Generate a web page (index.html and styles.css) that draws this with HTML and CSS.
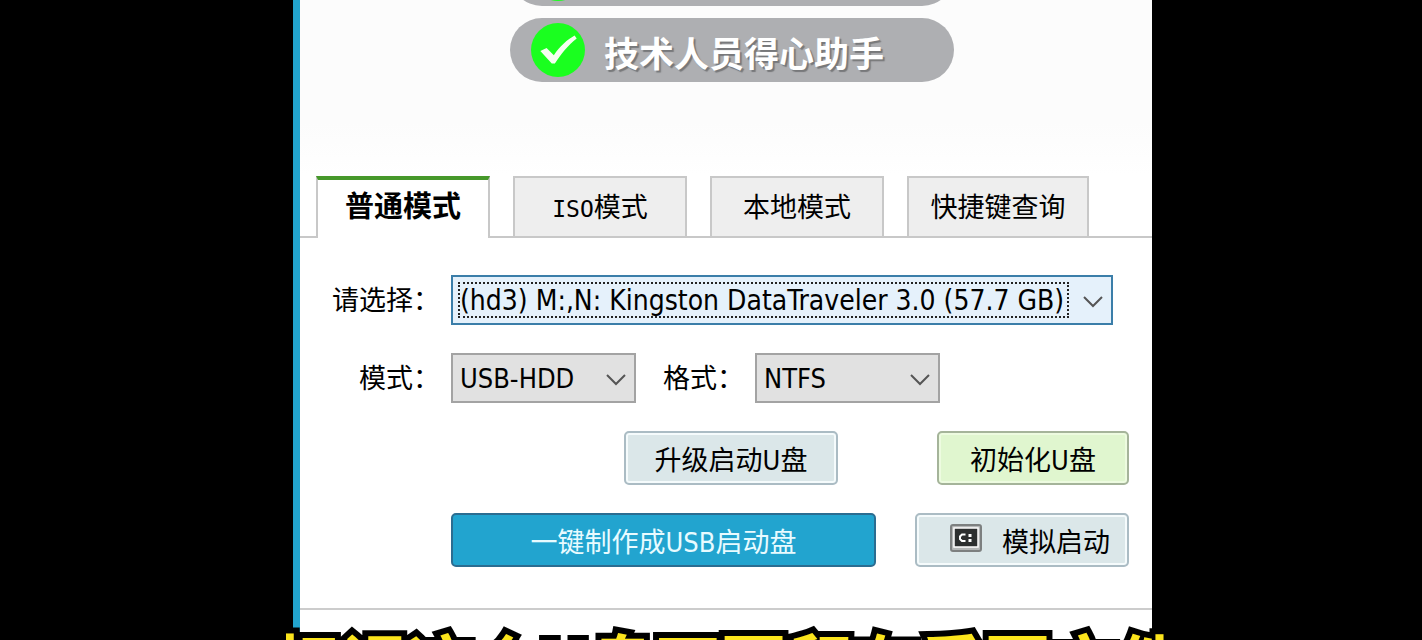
FILE: index.html
```html
<!DOCTYPE html>
<html lang="zh-CN">
<head>
  <meta charset="UTF-8">
  <title>U盘启动盘制作</title>
  <link rel="stylesheet" href="styles.css">
</head>
<body>
  <div class="window">
    <!-- Feature banner -->
    <header class="banner">
      <div class="pill">
        <svg class="check" viewBox="0 0 52 52"><circle cx="26" cy="26" r="26" fill="#1aff1f"/></svg>
      </div>
      <div class="pill">
        <svg class="check" viewBox="0 0 52 52">
          <circle cx="26" cy="26" r="26" fill="#1aff1f"/>
          <path d="M9 27 L15 24 L22 31 C28 22 35 16 42 12 L44 15 C36 21 29 30 23 39 L20 39 Z" fill="#f4fff0"/>
        </svg>
        <span>技术人员得心助手</span>
      </div>
    </header>

    <!-- Mode tabs -->
    <nav class="tabs">
      <button class="tab active">普通模式</button>
      <button class="tab"><span class="mono">ISO</span>模式</button>
      <button class="tab">本地模式</button>
      <button class="tab tab-wide">快捷键查询</button>
    </nav>

    <main class="form">
      <div class="row row-device">
        <label for="device">请选择：</label>
        <div class="select focused">
          <select id="device">
            <option>(hd3) M:,N: Kingston DataTraveler 3.0 (57.7 GB)</option>
          </select>
          <svg class="arrow" viewBox="0 0 20 12"><path d="M1 1 L10 10 L19 1"/></svg>
        </div>
      </div>
      <div class="row">
        <label for="mode">模式：</label>
        <div class="select small">
          <select id="mode"><option>USB-HDD</option></select>
          <svg class="arrow" viewBox="0 0 20 12"><path d="M1 1 L10 10 L19 1"/></svg>
        </div>
        <label class="label-format" for="format">格式：</label>
        <div class="select small">
          <select id="format"><option>NTFS</option></select>
          <svg class="arrow" viewBox="0 0 20 12"><path d="M1 1 L10 10 L19 1"/></svg>
        </div>
      </div>
      <div class="row actions actions-top">
        <button class="btn">升级启动U盘</button>
        <button class="btn green">初始化U盘</button>
      </div>
      <div class="row actions">
        <button class="btn primary">一键制作成USB启动盘</button>
        <button class="btn simulate">
          <svg class="console" viewBox="0 0 32 28">
            <rect x="1" y="1" width="30" height="26" rx="2" fill="#b4b6b6" stroke="#7d8080" stroke-width="2"/>
            <rect x="4" y="4" width="24" height="19" fill="#2c2e2e" stroke="#fff" stroke-width="1.5"/>
            <path d="M15.5 10.5H12L10 12.500V15L12 17H15.500" fill="none" stroke="#fff" stroke-width="2"/>
            <path d="M18.500 10h3v3h-3zM18.500 15h3v3h-3z" fill="#fff"/>
          </svg>
          模拟启动
        </button>
      </div>
    </main>
    <footer class="footer"></footer>
  </div>

  <!-- Subtitle over the window -->
  <p class="caption">担误这个U盘不要留存重要文件</p>
</body>
</html>
```
FILE: styles.css
```css
* {
  box-sizing: border-box;
}
body {
  background-color: #000;
  font-family: "DejaVu Sans Condensed", "Noto Sans CJK SC", sans-serif;
  font-size: 27px;
  color: #000;
  margin: 0;
  position: relative;
  height: 100vh;
  overflow: hidden;
}
.window {
  display: flex;
  flex-direction: column;
  min-height: 100vh;
  margin: 0 270px 0 293px;
  background-color: #fff;
  border-left: 7px solid #22a4cd;
}
/* Feature banner */
.banner {
  height: 176px;
  padding-bottom: 94px;
  display: flex;
  flex-direction: column;
  align-items: center;
  justify-content: flex-end;
  gap: 12px;
  overflow: hidden;
  background: linear-gradient(#fcfcfc 70%, #fff);
}
.pill {
  flex-shrink: 0;
  display: flex;
  align-items: center;
  gap: 19px;
  width: 444px;
  height: 64px;
  padding-left: 21px;
  margin-left: 12px;
  border-radius: 32px;
  background-color: #aeafb2;
  color: #fff;
  font-family: "Noto Sans CJK SC", sans-serif;
  font-size: 35px;
  font-weight: bold;
  line-height: 40px;
  text-shadow: 2px 2px 1px #77787a;
}
.pill span {
  padding-top: 4px;
}
.check {
  width: 54px;
  height: 54px;
}
/* Tabs */
.tabs {
  display: flex;
  gap: 23px;
  padding-left: 16px;
  height: 62px;
  border-bottom: 2px solid #c8c8c8;
}
.tab {
  width: 174px;
  height: 60px;
  padding: 0 0 4px;
  border: 2px solid #c8c8c8;
  border-bottom: none;
  background-color: #eee;
  color: #000;
  font: inherit;
}
.tab-wide {
  width: 182px;
}
.tab.active {
  height: 62px;
  padding-bottom: 10px;
  border-top: 4px solid #46982a;
  background-color: #fff;
  font-size: 29px;
  font-weight: bold;
}
.mono {
  font-family: "DejaVu Sans Mono", monospace;
  font-size: 23px;
}
/* Form */
.form {
  display: flex;
  flex-direction: column;
  gap: 28px;
  padding: 37px 23px 41px 0;
}
.row {
  display: flex;
  align-items: center;
}
.row-device {
  padding-right: 16px;
}
label {
  flex-shrink: 0;
  width: 151px;
  padding: 0 11px 4px 0;
  text-align: right;
  font-family: "Noto Sans CJK SC", sans-serif;
}
.label-format {
  width: 119px;
}
.select {
  position: relative;
  flex: 1;
  min-width: 0;
  height: 50px;
}
.select.small {
  flex: none;
  width: 185px;
}
select {
  appearance: none;
  width: 100%;
  height: 100%;
  padding: 0 44px 0 7px;
  border: 2px solid #a3a3a3;
  border-radius: 0;
  background-color: #e1e1e1;
  color: #000;
  font: inherit;
}
.focused select {
  border-color: #3b7ea9;
  background-color: #e5f1fb;
  font-size: 28px;
}
/* dotted focus ring inside the combo box */
.focused::after {
  content: "";
  position: absolute;
  inset: 7px 44px 7px 7px;
  border: 2px dotted #222;
  pointer-events: none;
}
.arrow {
  position: absolute;
  top: 21px;
  right: 10px;
  width: 20px;
  height: 12px;
  fill: none;
  stroke: #555;
  stroke-width: 2;
  pointer-events: none;
}
.actions {
  justify-content: flex-end;
  gap: 39px;
}
.actions-top {
  gap: 99px;
}
.btn {
  display: flex;
  align-items: center;
  justify-content: center;
  width: 214px;
  height: 54px;
  padding: 0;
  border: 2px solid #abbcc4;
  border-radius: 5px;
  background-color: #dbe7e9;
  box-shadow: inset 0 0 0 2px #f5fbfc;
  color: #000;
  font: inherit;
}
.btn.green {
  width: 192px;
  border-color: #a5b49a;
  background-color: #e0f6cf;
  box-shadow: inset 0 0 0 2px #edfbe0;
}
.btn.primary {
  width: 425px;
  border-color: #2b6d91;
  background-color: #22a4cf;
  box-shadow: none;
  color: #e8fbff;
}
.btn.simulate {
  gap: 20px;
  padding-left: 16px;
}
.console {
  width: 32px;
  height: 28px;
  margin-bottom: 4px;
}
.footer {
  flex: 1;
  border-top: 2px solid #ccc;
}
/* Subtitle */
.caption {
  position: absolute;
  top: 628px;
  left: 0;
  right: 0;
  margin: 0;
  padding-left: 36px;
  text-align: center;
  white-space: nowrap;
  font-family: "Noto Sans CJK SC", sans-serif;
  font-size: 66px;
  font-weight: bold;
  line-height: 66px;
  color: #fbe41c;
  -webkit-text-stroke: 12px #000;
  stroke-linejoin: round;
  paint-order: stroke fill;
}
```
